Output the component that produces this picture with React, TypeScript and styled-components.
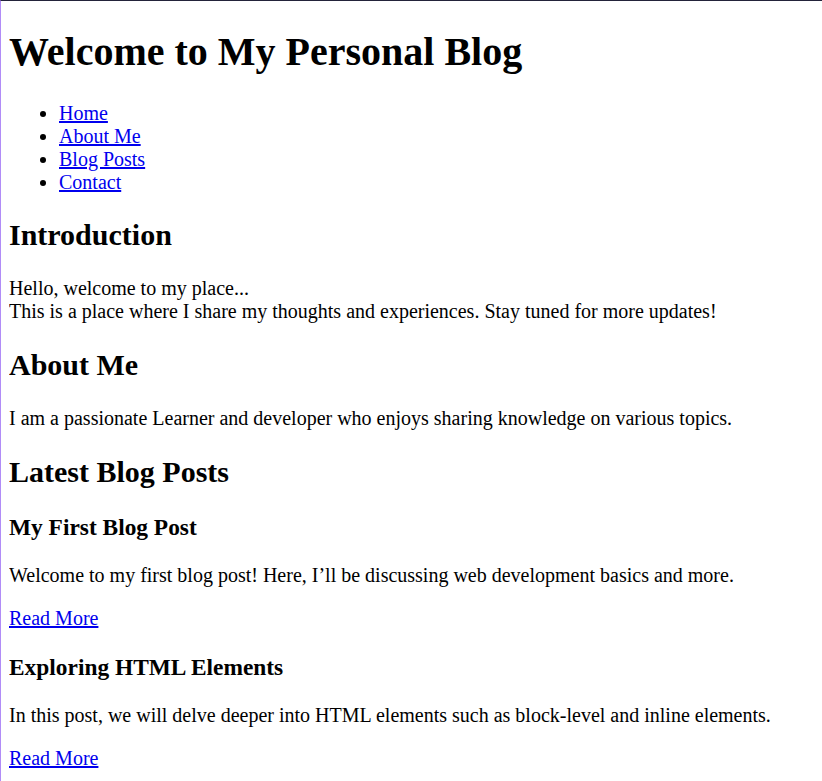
import React from "react";
import styled, { createGlobalStyle } from "styled-components";

const Global = createGlobalStyle`
  html {
    border-top: 1px solid #23233a;
    border-left: 1px solid #b18cf7;
    background: #fff;
    min-height: 100%;
  }
  body {
    margin: 8px;
    font-family: "Liberation Serif", "Times New Roman", serif;
    font-size: 20px;
    color: #000;
  }
`;

const Title = styled.h1`
  font-size: 2em;
  font-weight: bold;
  margin: 18.8px 0 0.67em;
`;

const NavList = styled.ul`
  margin: 1em 0;
  padding-left: 50px;
  list-style: disc;
`;

const Link = styled.a`
  color: #0000ee;
  text-decoration: underline;
`;

const SectionTitle = styled.h2`
  font-size: 1.5em;
  font-weight: bold;
  margin: 0.83em 0;
`;

const PostTitle = styled.h3`
  font-size: 1.17em;
  font-weight: bold;
  margin: 1em 0;
`;

const Text = styled.p`
  margin: 1em 0;
`;

const posts = [
  {
    title: "My First Blog Post",
    text: "Welcome to my first blog post! Here, I\u2019ll be discussing web development basics and more.",
  },
  {
    title: "Exploring HTML Elements",
    text: "In this post, we will delve deeper into HTML elements such as block-level and inline elements.",
  },
];

export default function App() {
  return (
    <>
      <Global />
      <header>
        <Title>Welcome to My Personal Blog</Title>
        <nav>
          <NavList>
            <li><Link href="#home">Home</Link></li>
            <li><Link href="#about">About Me</Link></li>
            <li><Link href="#posts">Blog Posts</Link></li>
            <li><Link href="#contact">Contact</Link></li>
          </NavList>
        </nav>
      </header>
      <section>
        <SectionTitle>Introduction</SectionTitle>
        <Text>
          Hello, welcome to my place...
          <br />
          This is a place where I share my thoughts and experiences. Stay tuned for more updates!
        </Text>
      </section>
      <section>
        <SectionTitle>About Me</SectionTitle>
        <Text>I am a passionate Learner and developer who enjoys sharing knowledge on various topics.</Text>
      </section>
      <section>
        <SectionTitle>Latest Blog Posts</SectionTitle>
        {posts.map((p) => (
          <article key={p.title}>
            <PostTitle>{p.title}</PostTitle>
            <Text>{p.text}</Text>
            <Link href="#">Read More</Link>
          </article>
        ))}
      </section>
    </>
  );
}
